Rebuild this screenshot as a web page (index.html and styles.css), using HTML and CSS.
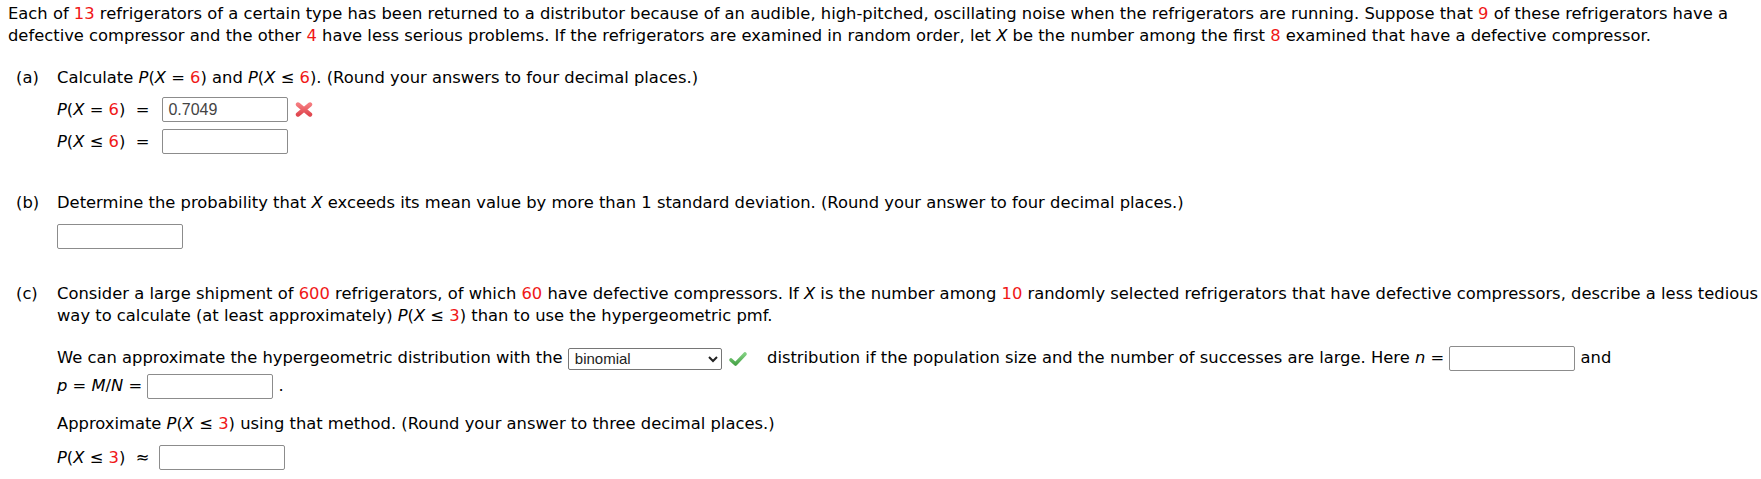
FILE: index.html
```html
<!DOCTYPE html>
<html lang="en">

<head>
    <meta charset="UTF-8">
    <title>Question</title>
    <link rel="stylesheet" href="styles.css">
</head>

<body>
    <div class="question">
        <p class="intro">Each of <span class="num">13</span> refrigerators of a certain type has been returned to a distributor because of an audible, high-pitched, oscillating noise when the refrigerators are running. Suppose that <span class="num">9</span> of these refrigerators have a defective compressor and the other <span class="num">4</span> have less serious problems. If the refrigerators are examined in random order, let <i>X</i> be the number among the first <span class="num">8</span> examined that have a defective compressor.</p>

        <!-- parte (a) -->
        <div class="part part-a">
            <span class="label">(a)</span>
            <div class="part-body">
                <p>Calculate <i>P</i>(<i>X</i> = <span class="num">6</span>) and <i>P</i>(<i>X</i> &le; <span class="num">6</span>). (Round your answers to four decimal places.)</p>
                <div class="eq-grid">
                    <span class="eq"><i>P</i>(<i>X</i> = <span class="num">6</span>)&nbsp; =</span>
                    <span class="answer"><input class="box" type="text" value="0.7049">
                        <svg class="mark" width="18" height="15" viewBox="0 0 18 15">
                            <defs>
                                <linearGradient id="xg" x1="0" y1="0" x2="0" y2="1">
                                    <stop offset="0" stop-color="#f47a7e" />
                                    <stop offset="1" stop-color="#e04850" />
                                </linearGradient>
                            </defs>
                            <path d="M3 2.5 L15 12.5 M15 2.5 L3 12.5" stroke="url(#xg)" stroke-width="4.4" stroke-linecap="round" fill="none" />
                        </svg>
                    </span>
                    <span class="eq"><i>P</i>(<i>X</i> &le; <span class="num">6</span>)&nbsp; =</span>
                    <span class="answer"><input class="box" type="text"></span>
                </div>
            </div>
        </div>

        <!-- parte (b) -->
        <div class="part part-b">
            <span class="label">(b)</span>
            <div class="part-body">
                <p>Determine the probability that <i>X</i> exceeds its mean value by more than 1 standard deviation. (Round your answer to four decimal places.)</p>
                <div class="answer-line"><input class="box" type="text"></div>
            </div>
        </div>

        <!-- parte (c) -->
        <div class="part part-c">
            <span class="label">(c)</span>
            <div class="part-body">
                <p>Consider a large shipment of <span class="num">600</span> refrigerators, of which <span class="num">60</span> have defective compressors. If <i>X</i> is the number among <span class="num">10</span> randomly selected refrigerators that have defective compressors, describe a less tedious way to calculate (at least approximately) <i>P</i>(<i>X</i> &le; <span class="num">3</span>) than to use the hypergeometric pmf.</p>
                <p class="approx">We can approximate the hypergeometric distribution with the
                    <span class="select-wrap">
                        <select class="dist">
                            <option>binomial</option>
                        </select>
                        <svg class="mark check" width="20" height="16" viewBox="0 0 20 16">
                            <defs>
                                <linearGradient id="cg" x1="0" y1="0" x2="0" y2="1">
                                    <stop offset="0" stop-color="#7fcf7f" />
                                    <stop offset="1" stop-color="#4aa54a" />
                                </linearGradient>
                            </defs>
                            <path d="M3 9 L7.5 13 L17 3" stroke="url(#cg)" stroke-width="3.6" stroke-linecap="round" stroke-linejoin="round" fill="none" />
                        </svg>
                    </span>
                    distribution if the population size and the number of successes are large. Here <i>n</i> = <input class="box" type="text"> and<br>
                    <i>p</i> = <i>M</i>/<i>N</i> = <input class="box" type="text"> .
                </p>
                <p class="approx-q">Approximate <i>P</i>(<i>X</i> &le; <span class="num">3</span>) using that method. (Round your answer to three decimal places.)</p>
                <div class="eq-last">
                    <span class="eq"><i>P</i>(<i>X</i> &le; <span class="num">3</span>)&nbsp; &asymp;</span>
                    <input class="box" type="text">
                </div>
            </div>
        </div>
    </div>
</body>

</html>
```

FILE: styles.css
```css
body {
    margin: 0;
    padding: 3px 0 0 8px;
    font-family: 'DejaVu Sans', Verdana, sans-serif;
    font-size: 16.35px;
    line-height: 22px;
    color: #000;
    background: #fff;
}

p {
    margin: 0;
}

.num {
    color: #f01818;
}

.intro {
    margin-right: 8px;
    margin-bottom: 20px;
}

.part {
    display: grid;
    grid-template-columns: 41px 1fr;
    padding-left: 8px;
}

.eq-grid {
    display: grid;
    grid-template-columns: auto 1fr;
    column-gap: 13px;
    row-gap: 7px;
    align-items: center;
    margin-top: 8px;
}

.answer {
    display: flex;
    align-items: center;
    gap: 7px;
}

.box {
    width: 126px;
    height: 25px;
    box-sizing: border-box;
    border: 1px solid #8c8c8c;
    border-radius: 2px;
    padding: 1px 5px;
    font-family: 'Liberation Sans', Arial, sans-serif;
    font-size: 16px;
    color: #444;
    vertical-align: middle;
}

.part-b {
    margin-top: 38px;
}

.answer-line {
    margin-top: 10px;
}

.part-c {
    margin-top: 34px;
}

.approx {
    margin-top: 17px;
    line-height: 28px;
}

.select-wrap {
    display: inline-flex;
    align-items: center;
    gap: 6px;
    margin-right: 14px;
    vertical-align: middle;
}

.dist {
    width: 154px;
    height: 22px;
    border: 1px solid #767676;
    border-radius: 2px;
    background: #fff;
    font-family: 'Liberation Sans', Arial, sans-serif;
    font-size: 15px;
    color: #222;
    padding: 0 2px;
}

.mark {
    display: block;
}

.approx-q {
    margin-top: 13px;
}

.eq-last {
    display: flex;
    align-items: center;
    gap: 10px;
    margin-top: 10px;
}
```
